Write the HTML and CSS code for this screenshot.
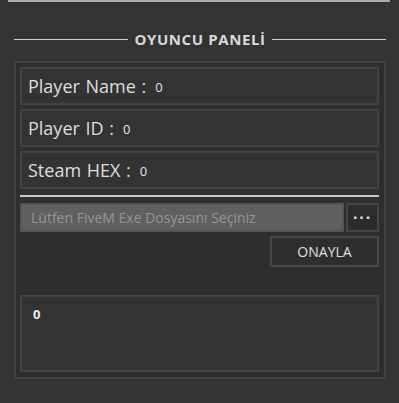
FILE: index.html
```html
<html>
    <head>
        <meta charset="utf-8">
        <link rel="stylesheet" href="styles.css">
    </head>
    <body>
        <div class="topbar"></div>

        <div class="heading">
            <span class="line"></span>
            <span class="name">OYUNCU PANELİ</span>
            <span class="line"></span>
        </div>

        <div class="panel">
            <div class="field"><span class="label">Player Name :</span><span class="value">0</span></div>
            <div class="field"><span class="label">Player ID :</span><span class="value">0</span></div>
            <div class="field"><span class="label">Steam HEX :</span><span class="value">0</span></div>

            <div class="separator"></div>

            <div class="picker">
                <input class="path" type="text" placeholder="Lütfen FiveM Exe Dosyasını Seçiniz">
                <button class="browse">···</button>
            </div>

            <div class="actions">
                <button class="confirm">ONAYLA</button>
            </div>

            <div class="output">0</div>
        </div>
    </body>
</html>
```

FILE: styles.css
```css
body {
    margin: 0;
    background: #333333;
    font-family: "Open Sans", "Noto Sans", sans-serif;
    color: #dcdcdc;
}

.topbar {
    height: 2px;
    margin: 0 9px 0 8px;
    background: #a9a9a9;
}

.heading {
    display: flex;
    align-items: center;
    margin: 24px 13px 0 14px;
    height: 26px;
}
.heading .line {
    flex: 1;
    height: 1px;
    background: #d0d0d0;
}
.heading .name {
    padding: 0 6px;
    font-family: "Open Sans", sans-serif;
    font-weight: 700;
    font-size: 15px;
    letter-spacing: 0.6px;
    color: #d8d8d8;
}

.panel {
    margin: 9px 13px 0 14px;
    border: 2px solid #414141;
    background: #2e2e2e;
    padding: 4px 5px 5px 4px;
}

.field {
    display: flex;
    align-items: center;
    height: 34px;
    margin-bottom: 4px;
    border: 2px solid #444444;
    background: #333333;
    padding: 0 6px;
}
.field .label {
    font-size: 18px;
    word-spacing: 1px;
    color: #dedede;
}
.field .value {
    font-size: 13px;
    margin-left: 9px;
    padding-top: 2px;
    color: #e4e4ee;
}

.separator {
    height: 2px;
    margin: 6px 0 6px;
    background: #c8c8c8;
}

.picker {
    display: flex;
    gap: 2px;
    height: 29px;
}
.path {
    flex: 1;
    border: 2px solid #555555;
    background: #606060;
    padding: 0 9px;
    font-family: "Open Sans", sans-serif;
    font-size: 14px;
    color: #959595;
    outline: none;
}
.path::placeholder {
    color: #959595;
}
.browse {
    width: 33px;
    border: 2px solid #454545;
    background: #2c2c2c;
    color: #e0e0e0;
    font-size: 16px;
    font-weight: 700;
    letter-spacing: 1px;
    padding: 0;
}

.actions {
    display: flex;
    justify-content: flex-end;
    margin-top: 4px;
}
.confirm {
    width: 109px;
    height: 31px;
    border: 2px solid #474747;
    background: #2e2e2e;
    color: #e0e0e0;
    font-family: "Open Sans", sans-serif;
    font-size: 14px;
    padding: 0;
}

.output {
    box-sizing: border-box;
    height: 77px;
    margin-top: 28px;
    border: 2px solid #434343;
    background: #333333;
    padding: 8px 11px;
    font-family: "Open Sans", sans-serif;
    font-weight: 700;
    font-size: 13px;
    color: #e8eef4;
}
```
